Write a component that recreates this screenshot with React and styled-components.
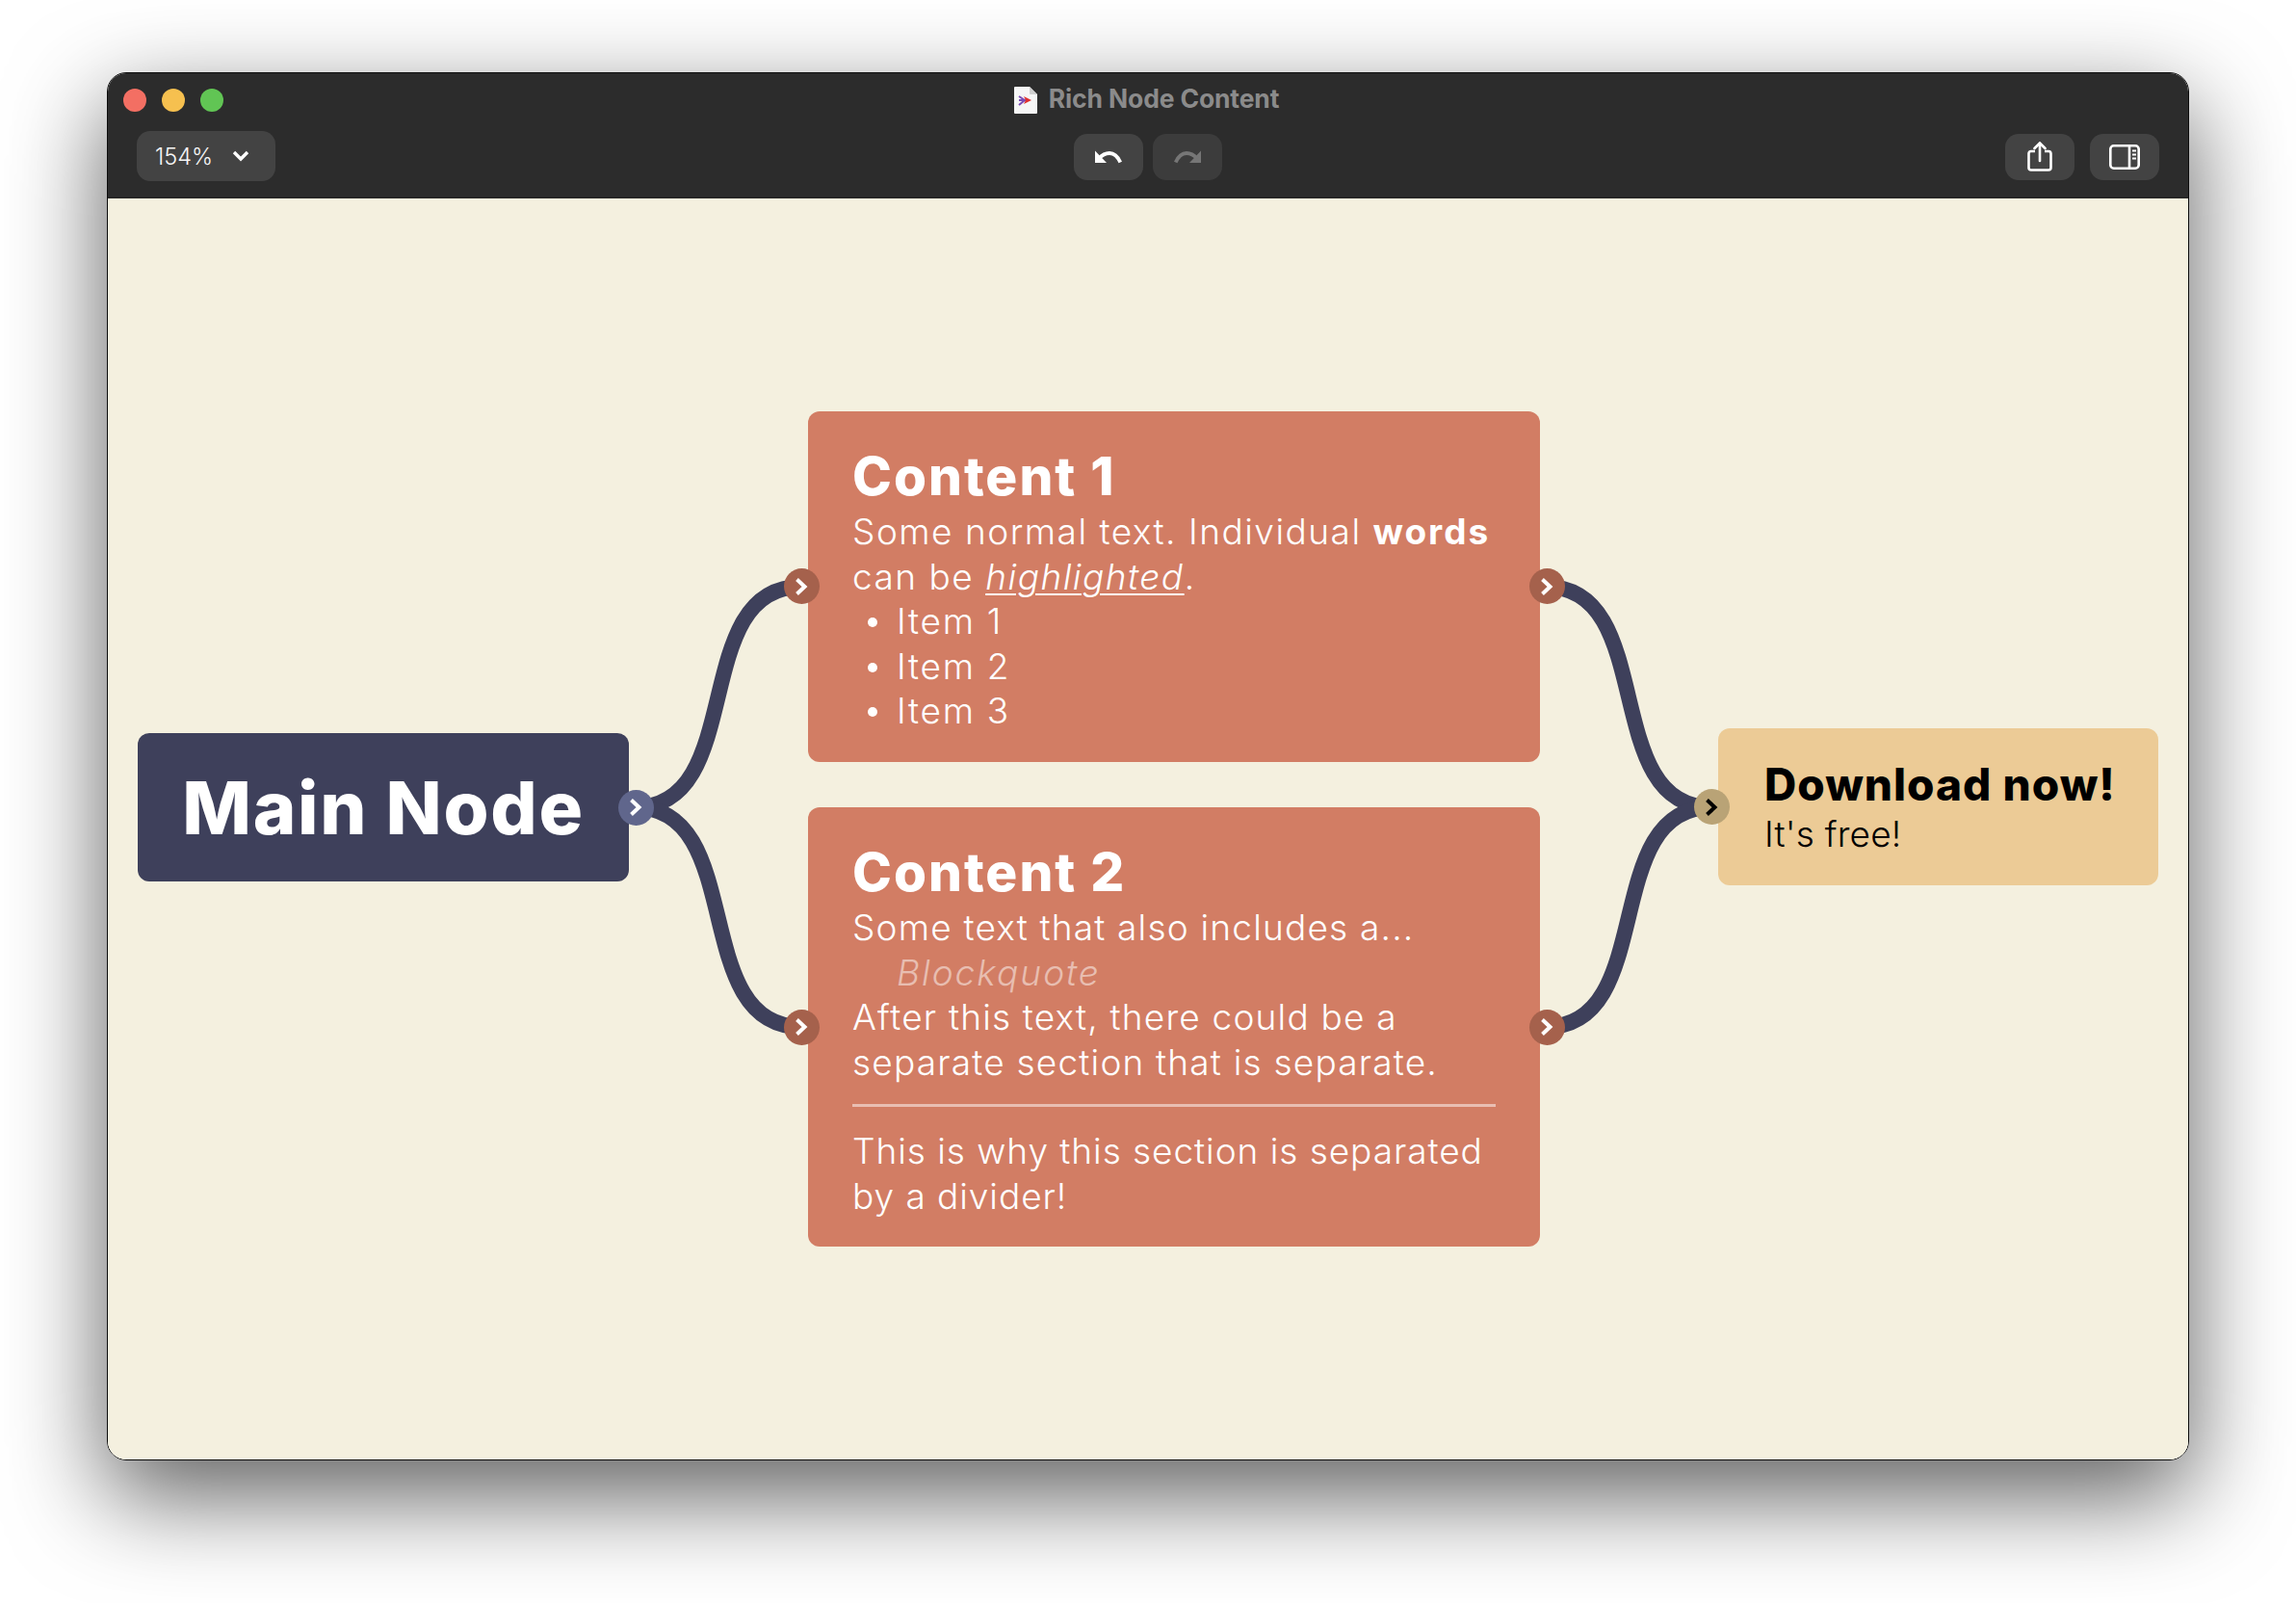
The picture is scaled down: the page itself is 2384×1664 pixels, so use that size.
import React from 'react';
import styled, { createGlobalStyle } from 'styled-components';

const GlobalStyle = createGlobalStyle`
  html, body {
    margin: 0;
    padding: 0;
    background: #fff;
  }
  body {
    font-family: Inter, "Liberation Sans", sans-serif;
  }
`;

const Page = styled.div`
  width: 2384px;
  height: 1664px;
  box-sizing: border-box;
  padding: 75px 0 0 111px;
  overflow: hidden;
`;

const Window = styled.div`
  width: 2162px;
  height: 1441px;
  box-sizing: border-box;
  display: flex;
  flex-direction: column;
  border: 1px solid #0c0c0c;
  border-radius: 20px;
  overflow: hidden;
  box-shadow: 0 36px 100px 2px rgba(0, 0, 0, 0.62);
`;

const TitleBar = styled.div`
  height: 130px;
  box-sizing: border-box;
  flex: none;
  display: flex;
  flex-direction: column;
  background: #2c2c2c;
  border-bottom: 2px solid #272727;
`;

const TitleRow = styled.div`
  height: 56px;
  flex: none;
  position: relative;
  display: flex;
  align-items: center;
  justify-content: center;
  gap: 12px;
  padding-right: 3px;
`;

const Lights = styled.div`
  position: absolute;
  left: 16px;
  top: 16px;
  display: flex;
  gap: 16px;
`;

const Light = styled.span`
  width: 24px;
  height: 24px;
  border-radius: 50%;
  background: ${(props) => props.color};
`;

const Title = styled.span`
  font-size: 26.5px;
  font-weight: 700;
  color: #8b8b8b;
  letter-spacing: -0.15px;
  position: relative;
  top: -2px;
`;

const Toolbar = styled.div`
  display: grid;
  grid-template-columns: 1fr auto 1fr;
  align-items: center;
  padding: 6px 30px 0;
`;

const ToolGroup = styled.div`
  display: flex;
  gap: ${(props) => props.gap || 10}px;
  justify-content: ${(props) => props.justify || 'flex-start'};
`;

const ZoomButton = styled.div`
  width: 144px;
  height: 52px;
  box-sizing: border-box;
  padding-left: 19px;
  margin-top: -2px;
  display: flex;
  align-items: center;
  gap: 20px;
  border-radius: 14px;
  background: #434343;
  color: #f6f6f6;
  font-size: 23.5px;
  font-weight: 300;
`;

const ToolButton = styled.div`
  width: 72px;
  height: 48px;
  margin-top: -1px;
  display: flex;
  align-items: center;
  justify-content: center;
  border-radius: 14px;
  background: ${(props) => (props.dim ? '#3c3c3c' : '#434343')};
`;

const Canvas = styled.div`
  flex: 1;
  position: relative;
  background: #f4f0df;
`;

const Edges = styled.svg`
  position: absolute;
  left: 0;
  top: 0;
`;

const Node = styled.div`
  position: absolute;
  left: ${(props) => props.x}px;
  top: ${(props) => props.y}px;
  width: ${(props) => props.w}px;
  box-sizing: border-box;
  border-radius: 12px;
`;

const MainNode = styled(Node)`
  height: 154px;
  display: flex;
  align-items: center;
  justify-content: center;
  background: #3e405b;
  color: #fff;
  font-size: 76px;
  font-weight: 800;
  letter-spacing: 1.7px;
`;

const ContentNode = styled(Node)`
  padding: 33px 46px 29px;
  background: #d27d64;
  color: #fff;
  font-size: 37px;
  font-weight: 350;
  line-height: 46.5px;
`;

const CtaNode = styled(Node)`
  height: 163px;
  padding: 29px 30px 0 48px;
  background: #eccb96;
  color: #000;
`;

const Heading = styled.div`
  font-size: 55px;
  font-weight: 800;
  line-height: 69px;
  letter-spacing: 2px;
`;

const Text = styled.div`
  letter-spacing: ${(props) => props.spacing || 1.2}px;
`;

const Strong = styled.strong`
  font-weight: 700;
  letter-spacing: 2px;
`;

const Highlight = styled.em`
  font-style: italic;
  text-decoration: underline;
  text-decoration-thickness: 2px;
  text-underline-offset: 4px;
`;

const Items = styled.ul`
  margin: 0;
  padding: 0 0 0 46px;
  list-style: none;
  letter-spacing: 1.7px;
`;

const Item = styled.li`
  position: relative;

  &::before {
    content: '';
    position: absolute;
    left: -30px;
    top: 19px;
    width: 10px;
    height: 10px;
    border-radius: 50%;
    background: #fff;
  }
`;

const Quote = styled.div`
  padding-left: 46px;
  font-style: italic;
  color: rgba(255, 255, 255, 0.5);
  letter-spacing: 2px;
`;

const Divider = styled.hr`
  height: 3px;
  margin: 20px 0 23px;
  border: 0;
  background: rgba(255, 255, 255, 0.5);
`;

const CtaTitle = styled.div`
  font-size: 46px;
  font-weight: 800;
  line-height: 58px;
  letter-spacing: 1px;
`;

const CtaText = styled.div`
  font-size: 37px;
  font-weight: 350;
  line-height: 46px;
  letter-spacing: 0.2px;
`;

const HandleDot = styled.div`
  position: absolute;
  top: 50%;
  ${(props) => props.side}: -25.5px;
  width: 37px;
  height: 37px;
  margin-top: -18.5px;
  display: flex;
  align-items: center;
  justify-content: center;
  border-radius: 50%;
  background: ${(props) => props.color};
`;

const Handle = ({ side, color, stroke = '#fff' }) => (
  <HandleDot side={side} color={color}>
    <svg width="14" height="20" viewBox="0 0 14 20" fill="none">
      <path d="M2.5 2.5 L10.5 10 L2.5 17.5" stroke={stroke} strokeWidth="4" strokeLinejoin="miter" />
    </svg>
  </HandleDot>
);

const edge = (x1, y1, x2, y2) => {
  const d = (x2 - x1) * 0.68;
  return `M${x1} ${y1} C${x1 + d} ${y1} ${x2 - d} ${y2} ${x2} ${y2}`;
};

const edgeList = [
  edge(547, 632, 720, 403),
  edge(547, 632, 720, 860),
  edge(1493, 403, 1665, 632),
  edge(1493, 860, 1665, 632),
];

const DocIcon = () => (
  <svg width="24" height="28" viewBox="0 0 24 28">
    <path d="M1 0 H16 L24 8 V27 Q24 28 23 28 H1 Q0 28 0 27 V1 Q0 0 1 0 Z" fill="#f6f6f6" />
    <path d="M16 0 L24 8 H17 Q16 8 16 7 Z" fill="#cfcfcf" />
    <path d="M5 10 L11 14 L5 19" fill="none" stroke="#7a4bb5" strokeWidth="2" />
    <path d="M5 14 H12" stroke="#7a4bb5" strokeWidth="2" />
    <path d="M10 10 L18 14 L10 18 L12 14 Z" fill="#e0302f" />
  </svg>
);

const UndoIcon = ({ color, flip }) => (
  <svg width="28" height="14" viewBox="0 0 28 14" style={flip ? { transform: 'scaleX(-1)' } : undefined}>
    <path d="M0 0.5 V13 H12 Z" fill={color} />
    <path d="M4 8.5 Q9 3 15 3 Q22 3 26.3 12.5" fill="none" stroke={color} strokeWidth="3.8" />
  </svg>
);

const ShareIcon = () => (
  <svg width="26" height="32" viewBox="0 0 26 32" fill="none" stroke="#fff" strokeWidth="2.6">
    <path d="M8 10 H4 Q1.5 10 1.5 12.5 V27 Q1.5 29.5 4 29.5 H22 Q24.5 29.5 24.5 27 V12.5 Q24.5 10 22 10 H18" />
    <path d="M13 20 V2" strokeLinecap="round" />
    <path d="M7.5 7 L13 1.5 L18.5 7" strokeLinecap="round" />
  </svg>
);

const SidebarIcon = () => (
  <svg width="32" height="26" viewBox="0 0 32 26" fill="none" stroke="#fff" strokeWidth="2.6">
    <rect x="1.3" y="1.3" width="29.4" height="23.4" rx="3.5" />
    <path d="M21 1.3 V24.7" />
    <path d="M24 6.5 H28 M24 10.5 H28 M24 14.5 H28" strokeWidth="2" />
  </svg>
);

const App = () => (
  <Page>
    <GlobalStyle />
    <Window>
      <TitleBar>
        <TitleRow>
          <Lights>
            <Light color="#f36f63" />
            <Light color="#f6c04f" />
            <Light color="#61c554" />
          </Lights>
          <DocIcon />
          <Title>Rich Node Content</Title>
        </TitleRow>
        <Toolbar>
          <ToolGroup>
            <ZoomButton>
              154%
              <svg width="18" height="12" viewBox="0 0 18 12" fill="none">
                <path d="M2 2 L9 9 L16 2" stroke="#fff" strokeWidth="3.4" />
              </svg>
            </ZoomButton>
          </ToolGroup>
          <ToolGroup>
            <ToolButton>
              <UndoIcon color="#fff" />
            </ToolButton>
            <ToolButton dim>
              <UndoIcon color="#767676" flip />
            </ToolButton>
          </ToolGroup>
          <ToolGroup justify="flex-end" gap={16}>
            <ToolButton>
              <ShareIcon />
            </ToolButton>
            <ToolButton>
              <SidebarIcon />
            </ToolButton>
          </ToolGroup>
        </Toolbar>
      </TitleBar>
      <Canvas>
        <Edges width="2160" height="1310" fill="none">
          {edgeList.map((d) => (
            <path key={d} d={d} stroke="#3e405b" strokeWidth="16" />
          ))}
        </Edges>

        <MainNode x={31} y={555} w={510}>
          Main Node
          <Handle side="right" color="#60668c" />
        </MainNode>

        <ContentNode x={727} y={221} w={760}>
          <Handle side="left" color="#a5614c" />
          <Heading>Content 1</Heading>
          <Text spacing={1.5}>
            Some normal text. Individual <Strong>words</Strong> can be <Highlight>highlighted</Highlight>.
          </Text>
          <Items>
            <Item>Item 1</Item>
            <Item>Item 2</Item>
            <Item>Item 3</Item>
          </Items>
          <Handle side="right" color="#a5614c" />
        </ContentNode>

        <ContentNode x={727} y={632} w={760}>
          <Handle side="left" color="#a5614c" />
          <Heading>Content 2</Heading>
          <Text>Some text that also includes a...</Text>
          <Quote>Blockquote</Quote>
          <Text>After this text, there could be a separate section that is separate.</Text>
          <Divider />
          <Text spacing={0.95}>This is why this section is separated by a divider!</Text>
          <Handle side="right" color="#a5614c" />
        </ContentNode>

        <CtaNode x={1672} y={550} w={457}>
          <Handle side="left" color="#b9a376" stroke="#000" />
          <CtaTitle>Download now!</CtaTitle>
          <CtaText>It's free!</CtaText>
        </CtaNode>
      </Canvas>
    </Window>
  </Page>
);

export default App;
